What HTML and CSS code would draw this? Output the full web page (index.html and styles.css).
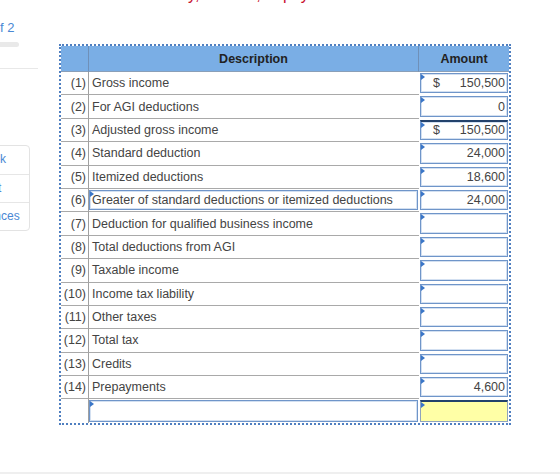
FILE: index.html
```html
<!DOCTYPE html>
<html>
<head>
<meta charset="utf-8">
<link rel="stylesheet" href="styles.css">
</head>
<body>
<div class="page">
  <aside class="side">
    <div class="count">1 of 2</div>
    <div class="bar"></div>
    <div class="rule"></div>
    <div class="card">
      <div class="item">eBook</div>
      <div class="item">Print</div>
      <div class="item">References</div>
    </div>
  </aside>
  <main class="main">
    <div class="title"><span>Family, Income, to pay</span></div>
    <div class="sheet">
      <div class="row head">
        <div class="c num"></div>
        <div class="c desc">Description</div>
        <div class="c amt">Amount</div>
      </div>
      <div class="row"><div class="c num">(1)</div><div class="c desc">Gross income</div><div class="c amt"><div class="inp"><span class="cur">$</span>150,500</div></div></div>
      <div class="row"><div class="c num">(2)</div><div class="c desc">For AGI deductions</div><div class="c amt"><div class="inp">0</div></div></div>
      <div class="row"><div class="c num">(3)</div><div class="c desc">Adjusted gross income</div><div class="c amt"><div class="inp total"><span class="cur">$</span>150,500</div></div></div>
      <div class="row"><div class="c num">(4)</div><div class="c desc">Standard deduction</div><div class="c amt"><div class="inp">24,000</div></div></div>
      <div class="row"><div class="c num">(5)</div><div class="c desc">Itemized deductions</div><div class="c amt"><div class="inp">18,600</div></div></div>
      <div class="row"><div class="c num">(6)</div><div class="c desc boxed"><div class="inp left">Greater of standard deductions or itemized deductions</div></div><div class="c amt"><div class="inp">24,000</div></div></div>
      <div class="row"><div class="c num">(7)</div><div class="c desc">Deduction for qualified business income</div><div class="c amt"><div class="inp"></div></div></div>
      <div class="row"><div class="c num">(8)</div><div class="c desc">Total deductions from AGI</div><div class="c amt"><div class="inp"></div></div></div>
      <div class="row"><div class="c num">(9)</div><div class="c desc">Taxable income</div><div class="c amt"><div class="inp"></div></div></div>
      <div class="row"><div class="c num">(10)</div><div class="c desc">Income tax liability</div><div class="c amt"><div class="inp"></div></div></div>
      <div class="row"><div class="c num">(11)</div><div class="c desc">Other taxes</div><div class="c amt"><div class="inp"></div></div></div>
      <div class="row"><div class="c num">(12)</div><div class="c desc">Total tax</div><div class="c amt"><div class="inp"></div></div></div>
      <div class="row"><div class="c num">(13)</div><div class="c desc">Credits</div><div class="c amt"><div class="inp"></div></div></div>
      <div class="row"><div class="c num">(14)</div><div class="c desc">Prepayments</div><div class="c amt"><div class="inp">4,600</div></div></div>
      <div class="row last"><div class="c num"></div><div class="c desc boxed"><div class="inp left"></div></div><div class="c amt"><div class="inp total yellow"></div></div></div>
    </div>
  </main>
</div>
<div class="footer"></div>
</body>
</html>
```

FILE: styles.css
```css
* { box-sizing: border-box; }
html, body { margin: 0; padding: 0; background: #fff; }
body {
  font-family: "Liberation Sans", Arial, sans-serif;
  color: #444;
  width: 560px;
  height: 474px;
  overflow: hidden;
  display: flex;
  flex-direction: column;
}
.page {
  display: grid;
  grid-template-columns: 38px 1fr;
  height: 472px;
}
.side { overflow: hidden; position: relative; }
.count {
  margin-top: 20px;
  margin-left: -18px;
  font-size: 13px;
  line-height: 15px;
  color: #4a88d4;
  white-space: nowrap;
}
.bar {
  margin-top: 7px;
  margin-left: -20px;
  width: 39px;
  height: 5px;
  border-radius: 3px;
  background: #e9e9e9;
}
.rule {
  margin-top: 21px;
  height: 1px;
  background: #e8e8e8;
}
.card {
  margin-top: 76px;
  margin-left: -52px;
  width: 82px;
  border: 1px solid #e3e3e3;
  border-radius: 4px;
}
.item {
  height: 28px;
  line-height: 26px;
  text-align: center;
  font-size: 12px;
  color: #4a88d4;
  white-space: nowrap;
}
.item + .item { border-top: 1px solid #e6e6e6; }

.main { padding-left: 21px; }
.title {
  height: 6px;
  overflow: hidden;
  padding-left: 90px;
}
.title span {
  display: block;
  margin-top: -13px;
  font-size: 16px;
  line-height: 16px;
  color: #c8102e;
  white-space: nowrap;
}
.sheet {
  margin-top: 38px;
  width: 452px;
  border: 2px dotted #4f7fc0;
  font-size: 12.5px;
}
.row {
  display: grid;
  grid-template-columns: 28px 330px 90px;
  height: 23.4px;
}
.c {
  border-bottom: 1px solid #a9a9a9;
  display: flex;
  align-items: center;
  min-width: 0;
}
.num {
  justify-content: flex-end;
  padding-right: 2px;
  border-right: 1px solid #a0a0a0;
  color: #444;
}
.desc { padding-left: 3px; color: #444; }
.amt { padding: 1px; border-bottom-color: #fff; }
.row.head { height: 26px; }
.row.head .c {
  background: #7aaee5;
  border-bottom: 1px solid #8a9fb8;
  justify-content: center;
  font-weight: bold;
  color: #222;
}
.row.head .num { border-right: 1px solid #6f90b8; }
.row.head .desc { border-right: 1px solid #6f90b8; padding-left: 0; }
.row.last .c { border-bottom: none; }
.desc.boxed { padding: 1px 1px 1px 0; }

.inp {
  position: relative;
  flex: 1;
  align-self: stretch;
  display: flex;
  align-items: center;
  justify-content: flex-end;
  padding: 0 2px 0 4px;
  border: 1px solid #6f95c9;
  box-shadow: inset 0 0 0 1px #d3e0f1;
  background: #fff;
  color: #444;
  white-space: nowrap;
}
.inp::before {
  content: "";
  position: absolute;
  left: 0;
  top: 0;
  border-top: 3px solid transparent;
  border-bottom: 3px solid transparent;
  border-left: 4px solid #3a76c8;
}
.inp.left { justify-content: flex-start; padding-left: 2px; }
.cur { margin-right: auto; padding-left: 8px; }
.inp.total { border-top: 2px solid #23426c; }
.inp.yellow { background: #ffffa6; box-shadow: none; border-color: #8fa3bd; border-top: 2px solid #23426c; }
.footer { height: 2px; background: #efefef; }
```
